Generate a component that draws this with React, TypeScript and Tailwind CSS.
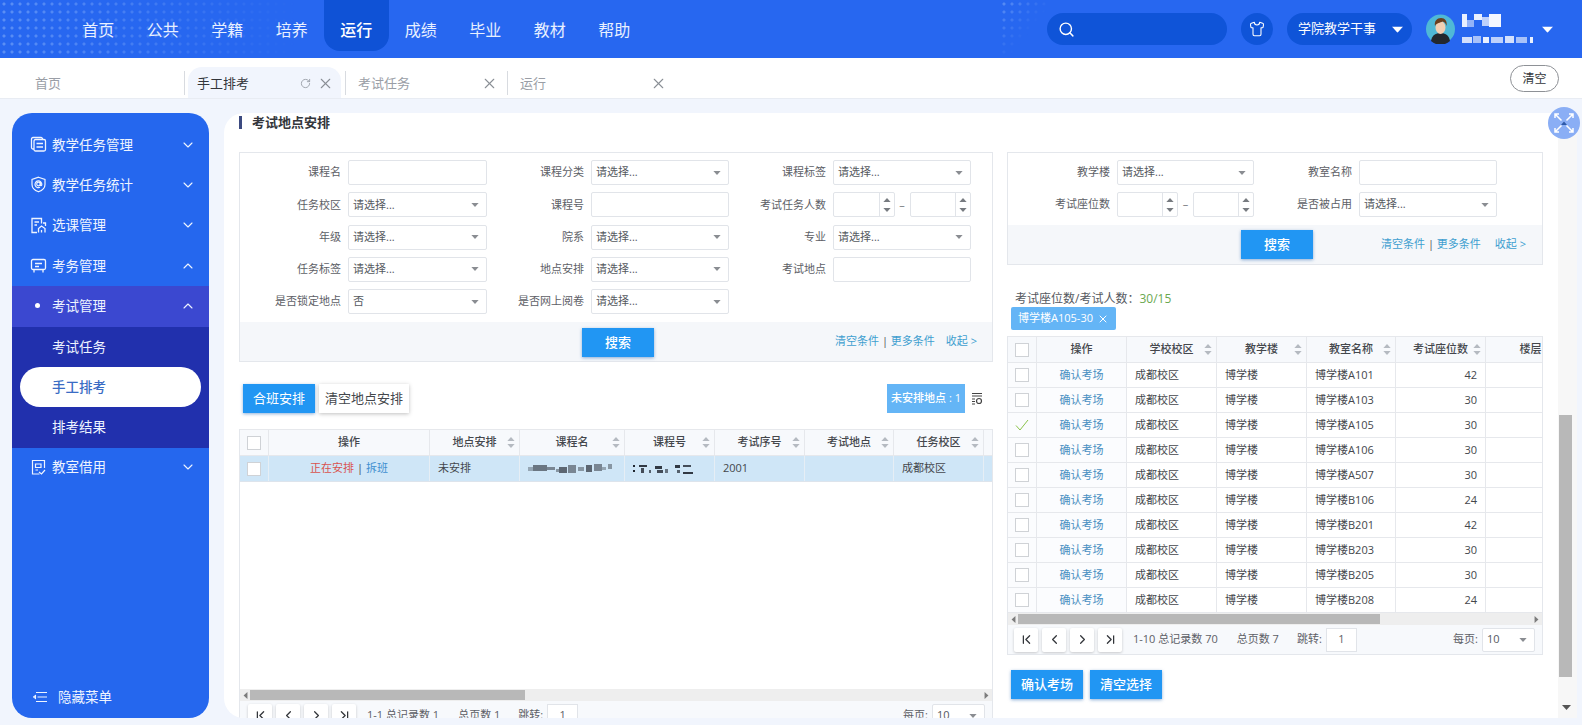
import { ChevronDown, ChevronFirst, ChevronLast, ChevronLeft, ChevronRight, ChevronUp, RotateCw, Search, Shirt, X } from "lucide-react";

const navItems = ["首页", "公共", "学籍", "培养", "运行", "成绩", "毕业", "教材", "帮助"];

const rooms = [
  ["博学楼A101", "42"],
  ["博学楼A103", "30"],
  ["博学楼A105", "30"],
  ["博学楼A106", "30"],
  ["博学楼A507", "30"],
  ["博学楼B106", "24"],
  ["博学楼B201", "42"],
  ["博学楼B203", "30"],
  ["博学楼B205", "30"],
  ["博学楼B208", "24"],
];

function Caret({ className = "" }: { className?: string }) {
  return (
    <svg width="9" height="5" viewBox="0 0 9 5" className={className}>
      <path d="M0 0h9L4.5 5z" fill="currentColor" />
    </svg>
  );
}

function Mosaic({ width, height, color, cells }: { width: number; height: number; color: string; cells: number[][] }) {
  return (
    <svg width={width} height={height} viewBox={`0 0 ${width} ${height}`}>
      {cells.map(([x, y, w, h, o], i) => <rect key={i} x={x} y={y} width={w} height={h} fill={color} opacity={o} />)}
    </svg>
  );
}

function IconTasks() {
  return (
    <svg width="17" height="17" viewBox="0 0 17 17" fill="none" stroke="currentColor" strokeWidth="1.3">
      <rect x="4" y="3.500" width="11.500" height="11.500" rx="1.500" />
      <path d="M4 13H3a1.500 1.500 0 0 1-1.500-1.500V3A1.500 1.500 0 0 1 3 1.500h8A1.500 1.500 0 0 1 12.500 3M6.500 7.500h6.500M6.500 11h6.500" />
    </svg>
  );
}

function IconShield() {
  return (
    <svg width="17" height="17" viewBox="0 0 17 17" fill="none" stroke="currentColor" strokeWidth="1.2">
      <path d="M8.500 1.200 15 3.500v5c0 3.500-3 6-6.500 7.300C5 14.500 2 12 2 8.500v-5z" />
      <circle cx="8.500" cy="8" r="1.800" />
      <path d="M10.300 6.200v2.800c0 1 1.500 1 1.500-.5A3.400 3.400 0 1 0 10 11.300" />
    </svg>
  );
}

function IconCourse() {
  return (
    <svg width="17" height="17" viewBox="0 0 17 17" fill="none" stroke="currentColor" strokeWidth="1.3">
      <path d="M7 15.500H2V1.500h9.500v5M4.500 5h4.500M4.500 8h2.500" />
      <path d="M13 6h2.500v3M8.500 15.500v-4l3-2.500 3.500 2.500v4M11.500 15.500V13" />
    </svg>
  );
}

function IconExam() {
  return (
    <svg width="17" height="17" viewBox="0 0 17 17" fill="none" stroke="currentColor" strokeWidth="1.3">
      <rect x="1.500" y="2.500" width="14" height="10" rx="1.500" />
      <path d="M5 6.500h7M5 9.500h4M4 12.500v3M13 12.500v3" />
    </svg>
  );
}

function IconRoom() {
  return (
    <svg width="17" height="17" viewBox="0 0 17 17" fill="none" stroke="currentColor" strokeWidth="1.2">
      <path d="M14.500 9V1.500h-12v13.500h7" />
      <path d="M5.500 5h5.500v3.500H5.500zM5.500 11h2.500M9 13l2.500 2 3.500-4" />
    </svg>
  );
}

function SideRow({ icon, label, open, sub }: { icon?: React.ReactNode; label: string; open?: boolean; sub?: boolean }) {
  return (
    <div className={`flex h-[40.33px] items-center pl-[18px] pr-[13px] pb-[1px] text-[13.5px] text-[#eef4ff] ${sub ? "bg-[#3b48d0]" : ""}`}>
      <span className="flex w-[22px] shrink-0 items-center justify-start">
        {icon ?? <span className="ml-[5px] size-[5px] rounded-full bg-white" />}
      </span>
      <span className="flex-1">{label}</span>
      {open
        ? <ChevronUp size={16} strokeWidth={1.6} />
        : <ChevronDown size={16} strokeWidth={1.6} />}
    </div>
  );
}

function Sidebar() {
  return (
    <aside className="flex h-[605px] w-[197px] shrink-0 flex-col overflow-hidden rounded-[20px] bg-[#2567ee] pt-[12px]">
      <SideRow icon={<IconTasks />} label="教学任务管理" />
      <SideRow icon={<IconShield />} label="教学任务统计" />
      <SideRow icon={<IconCourse />} label="选课管理" />
      <SideRow icon={<IconExam />} label="考务管理" open />
      <SideRow label="考试管理" open sub />
      <div className="bg-[#2130ad] text-[13.5px] text-[#eef4ff]">
        <div className="flex h-[40.33px] items-center pl-[40px]">考试任务</div>
        <div className="mx-2 flex h-[40.33px] items-center rounded-full bg-white pl-[32px] font-medium text-[#3a6cc4]">手工排考</div>
        <div className="flex h-[40.33px] items-center pl-[40px]">排考结果</div>
      </div>
      <SideRow icon={<IconRoom />} label="教室借用" />
      <div className="mt-auto flex h-[42px] items-center pl-[21px] text-[13.5px] text-[#eef4ff]">
        <svg width="14" height="10" viewBox="0 0 14 10" fill="none" stroke="currentColor" strokeWidth="1.1">
          <path d="M3 .5h11M4.500 5H14M3 9.500h11M.5 5l2-1.500v3z" />
        </svg>
        <span className="ml-[11px]">隐藏菜单</span>
      </div>
    </aside>
  );
}

function Header() {
  return (
    <header className="relative flex h-[58px] shrink-0 items-center overflow-hidden bg-[#2767f0]">
      <div className="absolute left-0 top-0 h-[58px] w-[300px] bg-[radial-gradient(circle,#5b8ff5_1.3px,transparent_1.8px)] bg-[size:8px_8px] [mask-image:linear-gradient(to_right,black,transparent)]" />
      <div className="absolute left-[1000px] top-0 h-[58px] w-[46px] bg-[radial-gradient(circle,#5b8ff5_1.3px,transparent_1.8px)] bg-[size:8px_8px] [mask-image:linear-gradient(to_bottom_right,black,transparent_60%)]" />
      <nav className="relative ml-[66px] flex h-full">
        {navItems.map((n) => (
          <div
            key={n}
            className={`flex h-[51px] w-[64.500px] items-center justify-center pt-[8px] text-[16px] ${n === "运行" ? "rounded-b-[16px] bg-[#0f52d6] font-medium text-white" : "text-[#e8f0ff]"}`}
          >
            {n}
          </div>
        ))}
      </nav>
      <div className="relative ml-auto flex h-[32px] w-[180px] items-center rounded-full bg-[#0f54d8] pl-[11px] text-white">
        <Search size={17} strokeWidth={2} />
      </div>
      <div className="relative ml-[14px] flex size-[32px] items-center justify-center rounded-full bg-[#0f54d8] text-white">
        <Shirt size={16} strokeWidth={1.6} />
      </div>
      <div className="relative ml-[14px] flex h-[32px] w-[125px] items-center rounded-full bg-[#0f54d8] pl-[11px] pr-[10px] text-[13px] text-white">
        <span className="flex-1">学院教学干事</span>
        <Caret className="scale-125" />
      </div>
      <div className="relative ml-[14px] mr-[20px] flex w-[136px] items-center pr-[10px] text-white">
        <svg width="29" height="30" viewBox="0 0 29 30" className="shrink-0">
          <circle cx="14.500" cy="15" r="14.500" fill="#4fb8d6" />
          <path d="M5 27c1-6 5-8 9.500-8s8.500 2 9.500 8a14 14 0 0 1-19 0z" fill="#23282e" />
          <ellipse cx="14.500" cy="13.500" rx="5" ry="6.500" fill="#f3cfb3" />
          <path d="M9 12c-1-5 2-8 6-8s6.500 3 5.500 8c-1-3-2-4-4-4.500C14 9 11 8.500 9 12z" fill="#6b3f1f" />
        </svg>
        <div className="ml-[7px] flex h-[30px] flex-1 flex-col justify-between">
          <Mosaic width={39} height={13} color="#ffffff" cells={[[0, 0, 5, 13, 0.9], [5, 6, 7, 7, 0.5], [12, 0, 8, 6, 0.9], [20, 3, 7, 9, 0.7], [27, 0, 12, 13, 0.95]]} />
          <Mosaic width={71} height={8} color="#ffffff" cells={[[0, 1, 10, 6, 0.8], [11, 0, 8, 7, 0.6], [21, 1, 6, 6, 0.9], [29, 1, 12, 6, 0.7], [43, 0, 9, 7, 0.8], [54, 1, 11, 6, 0.6], [68, 1, 3, 6, 0.9]]} />
        </div>
        <Caret className="shrink-0 scale-125" />
      </div>
    </header>
  );
}

function TabBar() {
  return (
    <div className="flex h-[41px] shrink-0 items-end border-b border-[#e8ecf3] bg-white text-[13px] text-[#9a9ea6]">
      <div className="flex h-[31px] w-[184px] items-center pl-[35px] pt-[2px]">首页</div>
      <span className="mb-[3px] h-[24px] w-px bg-[#d8dbe0]" />
      <div className="ml-[3px] flex h-[31px] w-[153px] items-center rounded-t-[14px] bg-[#f1f5fd] pl-[9px] pr-[7px] pt-[2px] text-[#33363b]">
        <span className="flex-1">手工排考</span>
        <RotateCw size={11} className="mr-[6px] text-[#9aa0a8]" />
        <X size={17} strokeWidth={1.5} className="text-[#8a8f96]" />
      </div>
      <span className="mb-[3px] ml-[4px] h-[24px] w-px bg-[#d8dbe0]" />
      <div className="flex h-[31px] w-[161px] items-center pl-[12px] pr-[9px] pt-[2px]">
        <span className="flex-1">考试任务</span>
        <X size={17} strokeWidth={1.5} className="text-[#8a8f96]" />
      </div>
      <span className="mb-[3px] h-[24px] w-px bg-[#d8dbe0]" />
      <div className="flex h-[31px] w-[160px] items-center pl-[12px] pr-[1px] pt-[2px]">
        <span className="flex-1">运行</span>
        <X size={17} strokeWidth={1.5} className="text-[#8a8f96]" />
      </div>
      <button type="button" className="mb-[6px] ml-auto mr-[23px] h-[27px] w-[49px] rounded-full border border-[#8e9196] text-[12px] text-[#33363b]">清空</button>
    </div>
  );
}

function Field({ label, labelW, inputW, children }: { label: string; labelW: number; inputW: number; children: React.ReactNode }) {
  return (
    <div className="flex h-[25px] items-center">
      <span className="pr-[7px] text-right text-[11px] text-[#5d6066]" style={{ width: labelW }}>{label}</span>
      <div className="flex h-[25px] items-center" style={{ width: inputW }}>{children}</div>
    </div>
  );
}

function TextBox() {
  return <div className="h-full w-full rounded-[2px] border border-[#e1e4e9] bg-white" />;
}

function Select({ value = "请选择..." }: { value?: string }) {
  return (
    <div className="flex h-full w-full items-center rounded-[2px] border border-[#e1e4e9] bg-white pl-[4px] pr-[7px] text-[11px] text-[#555960]">
      <span className="flex-1">{value}</span>
      <Caret className="h-[4px] w-[8px] text-[#8a8d92]" />
    </div>
  );
}

function NumBox() {
  return (
    <div className="flex h-full flex-1 rounded-[2px] border border-[#e1e4e9] bg-white">
      <span className="flex-1" />
      <span className="flex w-[15px] flex-col items-center justify-center gap-[6px] border-l border-[#e1e4e9] text-[#777b80]">
        <Caret className="h-[4px] w-[8px] rotate-180" />
        <Caret className="h-[4px] w-[8px]" />
      </span>
    </div>
  );
}

function NumRange() {
  return (
    <div className="flex h-full w-full items-center">
      <NumBox />
      <span className="w-[15px] text-center text-[11px] text-[#777b80]">–</span>
      <NumBox />
    </div>
  );
}

function PrimaryButton({ children, className = "" }: { children: React.ReactNode; className?: string }) {
  return (
    <button type="button" className={`h-[29px] w-[72px] bg-[#2196f3] text-[13px] font-medium text-white shadow-[0_1px_3px_rgba(33,100,180,0.5)] ${className}`}>
      {children}
    </button>
  );
}

function Links({ gap }: { gap: string }) {
  return (
    <div className="text-[11px] text-[#3f9fd0]">
      清空条件 <span className="text-[#555]">|</span> 更多条件<span className={gap}>收起 &gt;</span>
    </div>
  );
}

function LeftForm() {
  return (
    <div className="h-[210px] border border-[#e4e7ec] bg-white">
      <div className="grid h-[169px] grid-cols-[247px_242px_auto] content-start gap-y-[7.250px] pt-[7px]">
        <Field label="课程名" labelW={108} inputW={139}><TextBox /></Field>
        <Field label="课程分类" labelW={104} inputW={138}><Select /></Field>
        <Field label="课程标签" labelW={104} inputW={138}><Select /></Field>
        <Field label="任务校区" labelW={108} inputW={139}><Select /></Field>
        <Field label="课程号" labelW={104} inputW={138}><TextBox /></Field>
        <Field label="考试任务人数" labelW={104} inputW={138}><NumRange /></Field>
        <Field label="年级" labelW={108} inputW={139}><Select /></Field>
        <Field label="院系" labelW={104} inputW={138}><Select /></Field>
        <Field label="专业" labelW={104} inputW={138}><Select /></Field>
        <Field label="任务标签" labelW={108} inputW={139}><Select /></Field>
        <Field label="地点安排" labelW={104} inputW={138}><Select /></Field>
        <Field label="考试地点" labelW={104} inputW={138}><TextBox /></Field>
        <Field label="是否锁定地点" labelW={108} inputW={139}><Select value="否" /></Field>
        <Field label="是否网上阅卷" labelW={104} inputW={138}><Select /></Field>
      </div>
      <div className="flex h-[39px] items-center bg-[#f5f7fa] pr-[15px]">
        <PrimaryButton className="ml-[342px] mt-[2px]">搜索</PrimaryButton>
        <div className="ml-auto"><Links gap="ml-[11px]" /></div>
      </div>
    </div>
  );
}

function RightForm() {
  return (
    <div className="h-[113px] border border-[#e4e7ec] bg-white">
      <div className="grid h-[72px] grid-cols-[246px_auto] content-start gap-y-[7px] pt-[7px]">
        <Field label="教学楼" labelW={109} inputW={137}><Select /></Field>
        <Field label="教室名称" labelW={105} inputW={138}><TextBox /></Field>
        <Field label="考试座位数" labelW={109} inputW={137}><NumRange /></Field>
        <Field label="是否被占用" labelW={105} inputW={138}><Select /></Field>
      </div>
      <div className="flex h-[39px] items-center bg-[#f5f7fa] pr-[16px]">
        <PrimaryButton className="ml-[233px]">搜索</PrimaryButton>
        <div className="ml-auto"><Links gap="ml-[14px]" /></div>
      </div>
    </div>
  );
}

function Check() {
  return <span className="size-[14px] border border-[#cfd2d6] bg-white" />;
}

function Sort() {
  return (
    <span className="flex flex-col items-center gap-[3px] text-[#b5bac1]">
      <Caret className="h-[4px] w-[8px] rotate-180" />
      <Caret className="h-[4px] w-[8px]" />
    </span>
  );
}

function HeadCell({ label, sort }: { label: string; sort?: boolean }) {
  return (
    <div className="grid h-full grid-cols-[16px_1fr_16px] items-center overflow-hidden border-r border-[#e6e8ec] font-medium">
      <span />
      <span className="whitespace-nowrap text-center">{label}</span>
      {sort ? <Sort /> : <span />}
    </div>
  );
}

function CheckHead() {
  return <div className="flex h-full items-center justify-center border-r border-[#e6e8ec]"><Check /></div>;
}

function PageButton({ children }: { children: React.ReactNode }) {
  return (
    <span className="flex h-[24px] w-[24px] items-center justify-center rounded-[2px] bg-white text-[#33363b] shadow-[0_1px_3px_rgba(0,0,0,0.2)]">
      {children}
    </span>
  );
}

function Pager({ count, total, pages, inset }: { count: string; total: string; pages: string; inset: string }) {
  return (
    <div className={`flex h-[29px] shrink-0 items-center bg-[#f7f9fc] pr-[7px] text-[11px] text-[#5d6066] ${inset}`}>
      <span className="flex gap-[4px]">
        <PageButton><ChevronFirst size={15} /></PageButton>
        <PageButton><ChevronLeft size={15} /></PageButton>
        <PageButton><ChevronRight size={15} /></PageButton>
        <PageButton><ChevronLast size={15} /></PageButton>
      </span>
      <span className="ml-[11px]">{count} 总记录数 {total}</span>
      <span className="ml-[19px]">总页数 {pages}</span>
      <span className="ml-[18px]">跳转:</span>
      <span className="ml-[4px] flex h-[24px] w-[31px] items-center justify-center border border-[#e1e4e9] bg-white">1</span>
      <span className="ml-auto">每页:</span>
      <span className="ml-[4px] h-[24px] w-[53px]"><Select value="10" /></span>
    </div>
  );
}

function HScroll({ thumb }: { thumb: string }) {
  return (
    <div className="flex h-[12px] shrink-0 items-center bg-[#eeeeee] text-[#7c7c7c]">
      <Caret className="ml-[2px] w-[7px] rotate-90" />
      <div className={`ml-[1px] h-[10px] bg-[#b8b8b8] ${thumb}`} />
      <Caret className="ml-auto mr-[2px] w-[7px] -rotate-90" />
    </div>
  );
}

function LeftTable() {
  return (
    <div className="mt-[16px] flex h-[301px] flex-col overflow-hidden border-x border-[#e4e7ec] text-[11px] text-[#44474c]">
      <div className="grid h-[27px] shrink-0 grid-cols-[29px_161px_90px_105px_90px_90px_89px_90px_90px] border-y border-[#e6e8ec] bg-[#f7f9fc]">
        <CheckHead />
        <HeadCell label="操作" />
        <HeadCell label="地点安排" sort />
        <HeadCell label="课程名" sort />
        <HeadCell label="课程号" sort />
        <HeadCell label="考试序号" sort />
        <HeadCell label="考试地点" sort />
        <HeadCell label="任务校区" sort />
        <span />
      </div>
      <div className="grid h-[26px] shrink-0 grid-cols-[29px_161px_90px_105px_90px_90px_89px_90px_90px] items-center border-b border-[#dde4ec] bg-[#cfe6f7]">
        <div className="flex h-full items-center justify-center border-r border-[#e6eef5]"><Check /></div>
        <div className="flex h-full items-center justify-center border-r border-[#e6eef5]">
          <span className="text-[#d9534f]">正在安排</span>
          <span className="mx-[3px] text-[#44474c]">|</span>
          <span className="text-[#3f8fd0]">拆班</span>
        </div>
        <div className="flex h-full items-center border-r border-[#e6eef5] pl-[8px]">未安排</div>
        <div className="flex h-full items-center border-r border-[#e6eef5] pl-[8px]">
          <Mosaic width={88} height={12} color="#3f4650" cells={[[0, 4, 5, 4, 0.4], [5, 2, 14, 6, 0.7], [19, 4, 8, 3, 0.6], [28, 6, 3, 3, 0.5], [31, 4, 8, 6, 0.8], [40, 2, 8, 8, 0.6], [50, 4, 6, 4, 0.5], [58, 2, 6, 7, 0.8], [66, 1, 8, 7, 0.6], [74, 4, 4, 3, 0.4], [80, 1, 4, 5, 0.5]]} />
        </div>
        <div className="flex h-full items-center border-r border-[#e6eef5] pl-[8px]">
          <Mosaic width={64} height={12} color="#1f2630" cells={[[0, 2, 2, 2, 1], [0, 7, 2, 2, 1], [6, 2, 8, 2, 0.9], [8, 5, 3, 5, 0.8], [16, 7, 2, 3, 0.7], [22, 3, 7, 3, 0.9], [24, 7, 6, 3, 0.8], [32, 6, 3, 4, 0.6], [42, 2, 5, 3, 0.9], [44, 7, 3, 3, 0.7], [50, 2, 8, 2, 0.8], [50, 9, 10, 2, 0.9]]} />
        </div>
        <div className="flex h-full items-center border-r border-[#e6eef5] pl-[8px]">2001</div>
        <div className="h-full border-r border-[#e6eef5]" />
        <div className="flex h-full items-center border-r border-[#e6eef5] pl-[8px]">成都校区</div>
        <span />
      </div>
      <div className="min-h-0 flex-1 bg-white" />
      <HScroll thumb="w-[275px]" />
      <Pager count="1-1" total="1" pages="1" inset="pl-[8px]" />
    </div>
  );
}

function RightTable() {
  return (
    <div className="mt-[6px] flex h-[319px] flex-col overflow-hidden border border-t-0 border-[#e4e7ec] text-[11px] text-[#44474c]">
      <div className="grid h-[27px] shrink-0 grid-cols-[29px_90px_90px_90px_89px_90px_90px] border-y border-[#e6e8ec] bg-[#f7f9fc]">
        <CheckHead />
        <HeadCell label="操作" />
        <HeadCell label="学校校区" sort />
        <HeadCell label="教学楼" sort />
        <HeadCell label="教室名称" sort />
        <HeadCell label="考试座位数" sort />
        <HeadCell label="楼层" />
      </div>
      {rooms.map(([name, seats], i) => (
        <div key={name} className="grid h-[25px] shrink-0 grid-cols-[29px_90px_90px_90px_89px_90px_90px] items-center border-b border-[#e6e8ec] bg-white">
          <div className="flex h-full items-center justify-center border-r border-[#e6e8ec] bg-[#fbfcfe]">
            {i === 2
              ? <svg width="14" height="12" viewBox="0 0 14 12" fill="none" stroke="#8bc34a" strokeWidth="1"><path d="M1 6.500 5 11 13 1" /></svg>
              : <Check />}
          </div>
          <div className="flex h-full items-center justify-center border-r border-[#e6e8ec] bg-[#fbfcfe] text-[#4a90c2]">确认考场</div>
          <div className="flex h-full items-center border-r border-[#e6e8ec] pl-[8px]">成都校区</div>
          <div className="flex h-full items-center border-r border-[#e6e8ec] pl-[8px]">博学楼</div>
          <div className="flex h-full items-center border-r border-[#e6e8ec] pl-[8px]">{name}</div>
          <div className="flex h-full items-center justify-end border-r border-[#e6e8ec] pr-[8px]">{seats}</div>
          <span />
        </div>
      ))}
      <HScroll thumb="w-[362px]" />
      <Pager count="1-10" total="70" pages="7" inset="pl-[6px]" />
    </div>
  );
}

export default function App() {
  return (
    <div className="relative flex h-[725px] w-[1582px] flex-col overflow-hidden bg-[#f1f5fd] font-['Open_Sans','Noto_Sans_CJK_SC',sans-serif]">
      <Header />
      <TabBar />
      <div className="flex flex-1 items-start pl-[12px] pt-[14px]">
        <Sidebar />
        <main className="ml-[15px] flex h-[605px] w-[1353px] overflow-hidden rounded-l-[20px] bg-white pl-[15px]">
          <div className="w-[1304px] shrink-0">
            <div className="flex h-[39px] items-start pt-[2px]">
              <span className="mt-[1px] h-[13px] w-[3px] bg-[#3c4a80]" />
              <span className="ml-[10px] text-[13px] font-semibold leading-[15px] text-[#33363b]">考试地点安排</span>
            </div>
            <div className="flex gap-[14px]">
              <div className="w-[754px] shrink-0">
                <LeftForm />
                <div className="mt-[22px] flex h-[29px] items-center pl-[4px]">
                  <button type="button" className="h-[29px] w-[72px] bg-[#2196f3] text-[13px] text-white shadow-[0_1px_3px_rgba(33,100,180,0.5)]">合班安排</button>
                  <button type="button" className="ml-[4px] h-[29px] w-[90px] bg-white text-[13px] text-[#44474c] shadow-[0_1px_4px_rgba(0,0,0,0.25)]">清空地点安排</button>
                  <span className="ml-auto flex h-[29px] w-[78px] items-center justify-center bg-[#64b5f6] text-[11px] font-medium text-white">未安排地点 : 1</span>
                  <svg width="12" height="13" viewBox="0 0 12 13" className="ml-[6px] mr-[10px]" fill="none" stroke="#444" strokeWidth="1.2">
                    <path d="M1 1.500h10M1 4h10M1 7h3M1 9.500h3M1 12h3" />
                    <circle cx="8" cy="9" r="2.500" />
                  </svg>
                </div>
                <LeftTable />
              </div>
              <div className="w-[536px] shrink-0">
                <RightForm />
                <div className="mt-[26px] pl-[8px] text-[12px] leading-[16px] text-[#55585e]">
                  考试座位数/考试人数：<span className="text-[#6aa84f]">30/15</span>
                </div>
                <div className="pl-[4px]">
                  <span className="flex h-[23px] w-[105px] items-center justify-center gap-[4px] rounded-[2px] bg-[#64b5f6] text-[11px] text-white">
                    博学楼A105-30 <X size={12} strokeWidth={2} />
                  </span>
                </div>
                <RightTable />
                <div className="mt-[15px] flex gap-[7px] pl-[4px]">
                  <PrimaryButton>确认考场</PrimaryButton>
                  <PrimaryButton>清空选择</PrimaryButton>
                </div>
              </div>
            </div>
          </div>
          <div className="ml-auto flex h-full w-[19px] shrink-0 flex-col bg-[#f7f7f7] pl-[1px] text-[#555]">
            <div className="mt-[302px] h-[262px] w-[13px] bg-[#b8b8b8]" />
            <Caret className="mb-[8px] ml-[3px] mt-auto" />
          </div>
        </main>
      </div>
      <div className="absolute left-[1548px] top-[107px] flex size-[32px] items-center justify-center rounded-full bg-[#8aaef5]">
        <svg width="22" height="22" viewBox="0 0 22 22" fill="none" stroke="#ffffff" strokeWidth="1.5">
          <path d="M2 2l6.500 6.500M20 2l-6.500 6.500M2 20l6.500-6.500M20 20l-6.500-6.500M2 6V2h4M20 6V2h-4M2 16v4h4M20 16v4h-4" />
          <path d="M8 13l3-3.500 3 3.500z" fill="#2f5aa8" stroke="none" />
        </svg>
      </div>
    </div>
  );
}
